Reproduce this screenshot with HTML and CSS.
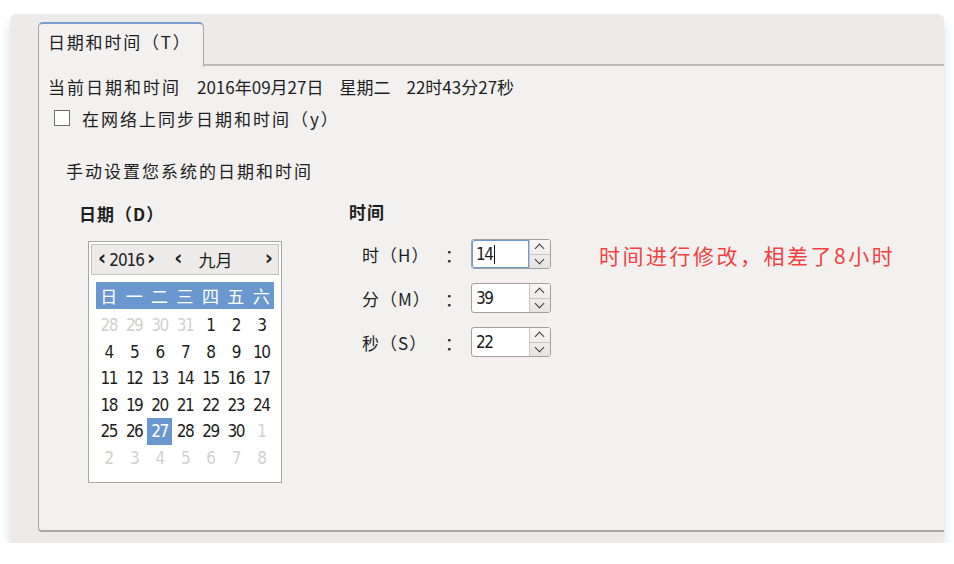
FILE: index.html
```html
<!DOCTYPE html>
<html>
<head>
    <title>日期和时间</title>
    <link rel="stylesheet" href="styles.css">
</head>
<body>
    <div class="window">
        <div class="tab-bar">
            <div class="tab">日期和时间（T）</div>
        </div>

        <div class="panel">
            <div class="info-line">
                <span class="label">当前日期和时间</span>
                <span class="value">2016年09月27日</span>
                <span class="value">星期二</span>
                <span class="value">22时43分27秒</span>
            </div>

            <label class="sync-row">
                <span class="check-box"></span>
                <span class="label">在网络上同步日期和时间（y）</span>
            </label>

            <div class="manual-title">手动设置您系统的日期和时间</div>

            <div class="settings">
                <div class="date-column">
                    <div class="section-title">日期（D）</div>

                    <div class="calendar">
                        <div class="cal-nav">
                            <span class="arrow">‹</span>
                            <span class="year">2016</span>
                            <span class="arrow">›</span>
                            <span class="arrow month-prev">‹</span>
                            <span class="month">九月</span>
                            <span class="arrow month-next">›</span>
                        </div>

                        <div class="cal-weekdays">
                            <span>日</span><span>一</span><span>二</span><span>三</span><span>四</span><span>五</span><span>六</span>
                        </div>

                        <div class="cal-days" id="calDays"></div>
                    </div>
                </div>

                <div class="time-column">
                    <div class="section-title">时间</div>

                    <div class="time-row">
                        <div class="time-label"><span>时（H）</span><span class="colon">：</span></div>
                        <div class="spin-box focused">
                            <div class="spin-value">14<span class="caret"></span></div>
                            <div class="spin-buttons"><span class="up"></span><span class="down"></span></div>
                        </div>
                        <div class="note">时间进行修改，相差了8小时</div>
                    </div>

                    <div class="time-row">
                        <div class="time-label"><span>分（M）</span><span class="colon">：</span></div>
                        <div class="spin-box">
                            <div class="spin-value">39</div>
                            <div class="spin-buttons"><span class="up"></span><span class="down"></span></div>
                        </div>
                    </div>

                    <div class="time-row">
                        <div class="time-label"><span>秒（S）</span><span class="colon">：</span></div>
                        <div class="spin-box">
                            <div class="spin-value">22</div>
                            <div class="spin-buttons"><span class="up"></span><span class="down"></span></div>
                        </div>
                    </div>
                </div>
            </div>
        </div>
    </div>

    <script>
        // September 2016 starts on a Thursday; fill 6 weeks
        const days = [];
        [28, 29, 30, 31].forEach(d => days.push({ d, other: true }));
        for (let d = 1; d <= 30; d++) days.push({ d, other: false, selected: d === 27 });
        for (let d = 1; d <= 8; d++) days.push({ d, other: true });

        const grid = document.getElementById('calDays');
        days.forEach(item => {
            const cell = document.createElement('span');
            cell.className = 'day' + (item.other ? ' other' : '') + (item.selected ? ' selected' : '');
            cell.textContent = item.d;
            grid.appendChild(cell);
        });
    </script>
</body>
</html>
```

FILE: styles.css
```css
body {
    margin: 0;
    background: #ffffff;
    font-family: "Noto Sans CJK SC", "Noto Sans", sans-serif;
    color: #1e1e1e;
}

.window {
    margin: 14px 10px 0 10px;
    height: 529px;
    box-sizing: border-box;
    padding: 8px 0 11px 28px;
    background: #edebe9;
    border-radius: 6px;
    box-shadow: 0 8px 12px rgba(165, 175, 205, 0.4);
    display: flex;
    flex-direction: column;
}

.tab-bar {
    display: flex;
    height: 42px;
}

.tab {
    width: 166px;
    box-sizing: border-box;
    background: #f2f1f0;
    border: 1px solid #a9a7a5;
    border-top: 2px solid #7c9ccb;
    border-bottom: none;
    border-radius: 5px 5px 0 0;
    padding: 6px 0 0 9px;
    font-size: 17px;
    letter-spacing: 1.8px;
    line-height: 24px;
    position: relative;
    z-index: 1;
    margin-bottom: -3px;
}

.panel {
    flex: 1;
    background: #f2f1f0;
    border-top: 2px solid #bfbdbb;
    border-left: 1px solid #a9a7a5;
    border-bottom: 2px solid #a9a7a5;
    border-bottom-left-radius: 4px;
    padding-left: 9px;
}

.info-line {
    margin-top: 9px;
    line-height: 24px;
    font-size: 17px;
    display: flex;
}

.label {
    letter-spacing: 2px;
}

.info-line .value {
    margin-left: 16px;
    letter-spacing: 0;
}

.sync-row {
    display: flex;
    align-items: center;
    height: 24px;
    margin-top: 7px;
    font-size: 17px;
}

.check-box {
    width: 14px;
    height: 14px;
    border: 1px solid #6f6d6b;
    background: #ffffff;
    margin: 0 12px 0 6px;
}

.manual-title {
    margin-top: 29px;
    padding-left: 18px;
    line-height: 24px;
    font-size: 17px;
    letter-spacing: 2px;
}

.settings {
    display: flex;
    margin-top: 19px;
    padding-left: 31px;
}

.date-column {
    width: 270px;
}

.section-title {
    line-height: 24px;
    font-size: 17px;
    font-weight: bold;
    letter-spacing: 1px;
}

.calendar {
    margin: 15px 0 0 9px;
    width: 194px;
    height: 242px;
    box-sizing: border-box;
    background: #ffffff;
    border: 1px solid #a8a6a4;
    padding: 2px;
}

.cal-nav {
    display: flex;
    align-items: center;
    height: 31px;
    box-sizing: border-box;
    background: #edebe9;
    border: 1px solid #c4c2c0;
    padding: 0 6px;
    font-family: "DejaVu Sans Condensed", "Liberation Sans Narrow", sans-serif;
    font-size: 17px;
    letter-spacing: -1px;
}

.cal-nav .arrow {
    font-size: 22px;
    line-height: 20px;
    margin-top: -3px;
    font-weight: bold;
}

.cal-nav .year {
    margin: 0 3px 0 4px;
}

.cal-nav .month-prev {
    margin-left: 20px;
}

.cal-nav .month {
    font-family: "Noto Sans CJK SC", sans-serif;
    margin-left: 17px;
    letter-spacing: 0;
}

.cal-nav .month-next {
    margin-left: auto;
}

.cal-weekdays {
    display: grid;
    grid-template-columns: repeat(7, 1fr);
    margin: 7px 5px 0 5px;
    height: 27px;
    background: #6b97cf;
    color: #ffffff;
    font-size: 17px;
    line-height: 27px;
    text-align: center;
}

.cal-days {
    display: grid;
    grid-template-columns: repeat(7, 1fr);
    grid-auto-rows: 26.5px;
    margin: 3px 5px 0 5px;
    font-family: "DejaVu Sans Condensed", "Liberation Sans Narrow", sans-serif;
    font-size: 17px;
    letter-spacing: -1.5px;
    text-align: center;
    line-height: 26.5px;
}

.day.other {
    color: #d3d1cf;
}

.day.selected {
    background: #6b97cf;
    color: #ffffff;
}

.time-column {
    margin-top: -2px;
}

.time-row {
    display: flex;
    align-items: center;
    height: 30px;
    margin-top: 14px;
    padding-left: 13px;
}

.section-title + .time-row {
    margin-top: 15px;
}

.time-label {
    width: 109px;
    display: flex;
    font-size: 17px;
    letter-spacing: 1px;
}

.time-label .colon {
    margin-left: auto;
    margin-right: 8px;
}

.spin-box {
    display: flex;
    width: 80px;
    height: 30px;
    box-sizing: border-box;
    border: 1px solid #a3a19f;
    border-radius: 3px;
    background: #ffffff;
    overflow: hidden;
}

.spin-value {
    flex: 1;
    display: flex;
    align-items: center;
    padding-left: 4px;
    font-family: "DejaVu Sans Condensed", "Liberation Sans Narrow", sans-serif;
    font-size: 17px;
    letter-spacing: -1.5px;
    border-right: 1px solid #c9c7c5;
}

.spin-box.focused .spin-value {
    box-shadow: inset 0 0 0 1px #6f9ad3;
    border-radius: 3px 0 0 3px;
}

.caret {
    width: 1px;
    height: 19px;
    background: #111111;
    margin-left: 2px;
}

.spin-buttons {
    width: 20px;
    display: flex;
    flex-direction: column;
    background: linear-gradient(#f7f6f5, #e6e4e2);
}

.spin-buttons span {
    flex: 1;
    position: relative;
}

.spin-buttons .up {
    border-bottom: 1px solid #c9c7c5;
}

.spin-buttons span::after {
    content: "";
    position: absolute;
    left: 6px;
    width: 6px;
    height: 6px;
    border-left: 1.5px solid #3c3c3c;
    border-top: 1.5px solid #3c3c3c;
}

.spin-buttons .up::after {
    top: 5px;
    transform: rotate(45deg);
}

.spin-buttons .down::after {
    top: 1px;
    transform: rotate(-135deg);
}

.note {
    margin-left: 48px;
    margin-top: 2px;
    font-size: 21px;
    letter-spacing: 2.5px;
    color: #f4413f;
}
```
